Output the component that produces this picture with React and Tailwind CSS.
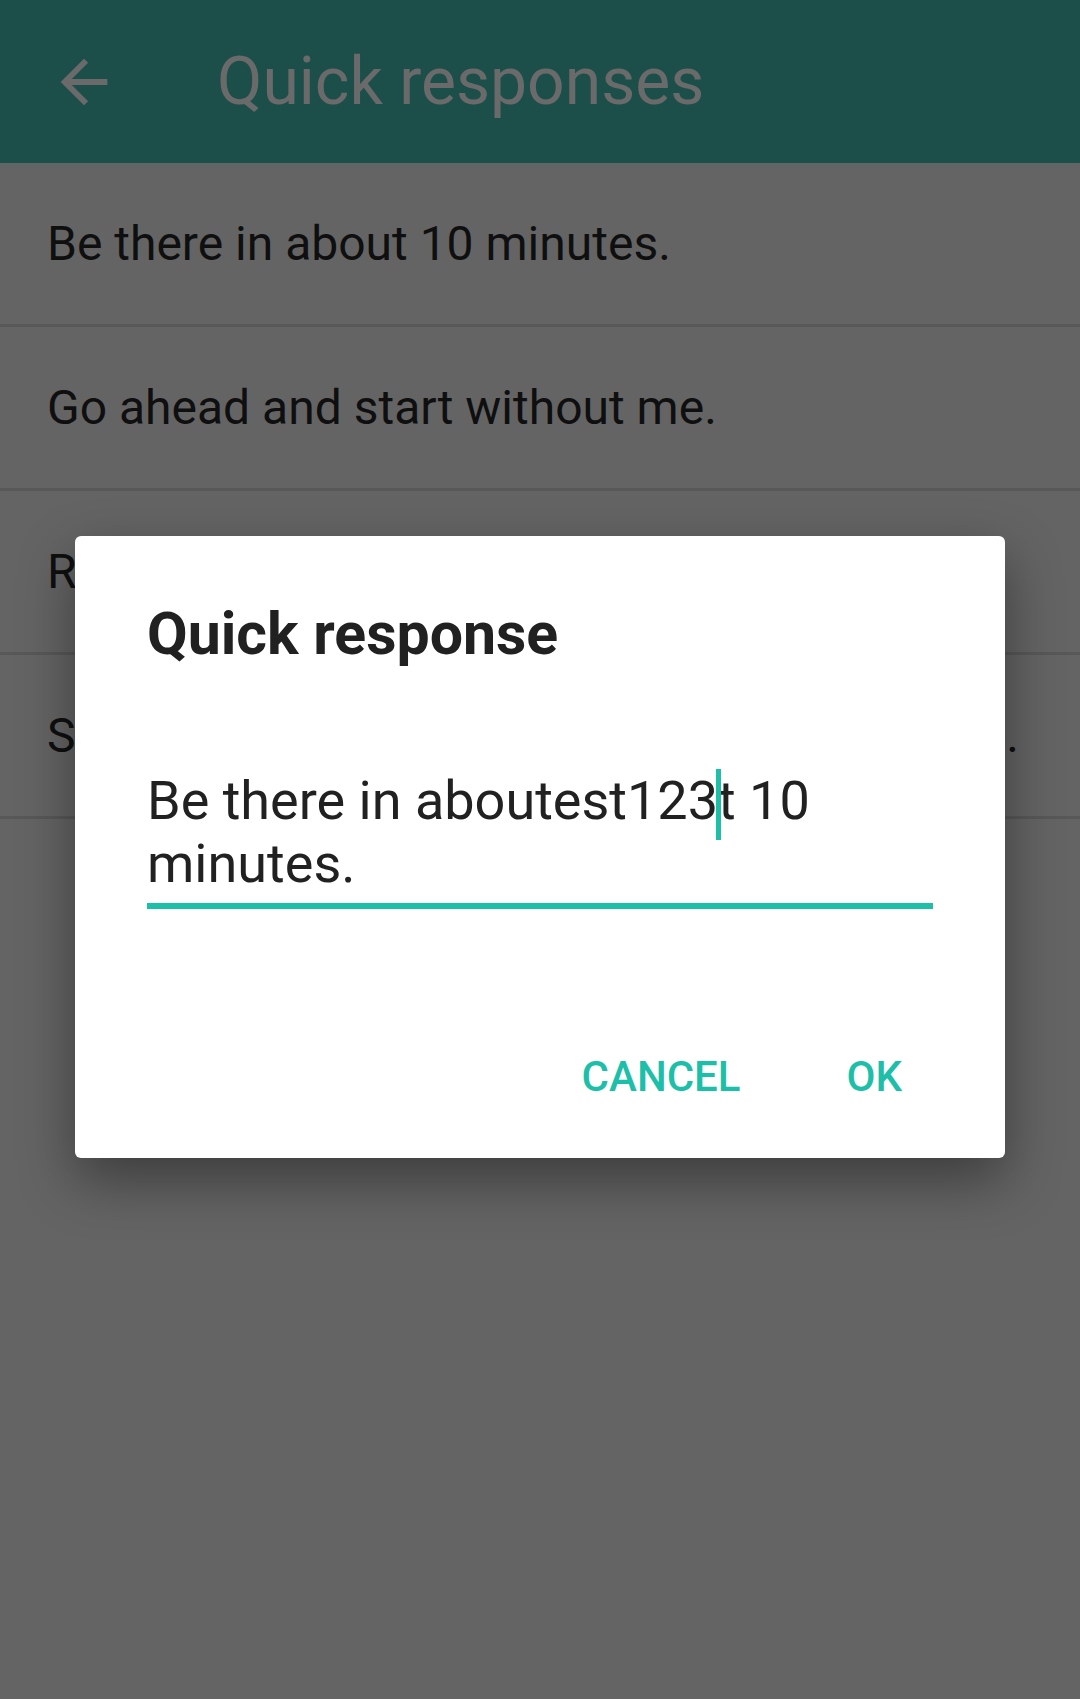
const responses = [
  "Be there in about 10 minutes.",
  "Go ahead and start without me.",
  "Running just a couple of minutes late.",
  "Sorry, I can't make it. We'll have to reschedule.",
];

function BackArrow() {
  return (
    <svg width="70" height="70" viewBox="0 0 24 24" fill="#6a6a6a">
      <path d="M20 11H7.83l5.59-5.59L12 4l-8 8 8 8 1.41-1.41L7.83 13H20v-2z" />
    </svg>
  );
}

export default function App() {
  return (
    <div
      className="relative w-[1080px] h-[1699px] bg-[#646464] overflow-hidden"
      style={{ fontFamily: "Roboto, 'Noto Sans', sans-serif" }}
    >
      {/* dimmed toolbar */}
      <header className="h-[163px] bg-[#1d4f4a] flex items-center">
        <div className="ml-[49px] w-[70px] h-[70px] flex items-center justify-center">
          <BackArrow />
        </div>
        <h1 className="ml-[98px] text-[66px] leading-none text-[#6a6a6a] font-normal">Quick responses</h1>
      </header>

      {/* list */}
      <ul>
        {responses.map((r) => (
          <li
            key={r}
            className="h-[164px] border-b-[3px] border-[#585858] flex items-center pl-[47px] pr-[60px]"
          >
            <span className="truncate text-[48px] text-[#0f0f0f]">{r}</span>
          </li>
        ))}
      </ul>

      {/* dialog */}
      <div className="absolute inset-0 flex justify-center items-start pt-[536px]">
        <div className="w-[930px] bg-white rounded-[6px] shadow-[0_22px_55px_rgba(0,0,0,0.4)] pt-[68px] pb-[56px]">
          <h2 className="pl-[72px] text-[59px] leading-[60px] font-bold text-[#212121]">Quick response</h2>

          <div className="mt-[105px] mx-[72px]">
            <p className="text-[54px] leading-[63px] text-[#212121]">
              Be there in aboutest123
              <span className="relative inline-block w-0 h-0">
                <span className="absolute left-[-2px] top-[-50px] w-[5px] h-[71px] bg-[#1dbfa8]" />
              </span>
              t 10 minutes.
            </p>
            <div className="mt-[8px] h-[6px] bg-[#1dbfa8]" />
          </div>

          <div className="mt-[143px] flex justify-end gap-[106px] pr-[103px]">
            <button className="text-[42px] leading-[50px] font-medium text-[#1dbfa8]">CANCEL</button>
            <button className="text-[42px] leading-[50px] font-medium text-[#1dbfa8]">OK</button>
          </div>
        </div>
      </div>
    </div>
  );
}
